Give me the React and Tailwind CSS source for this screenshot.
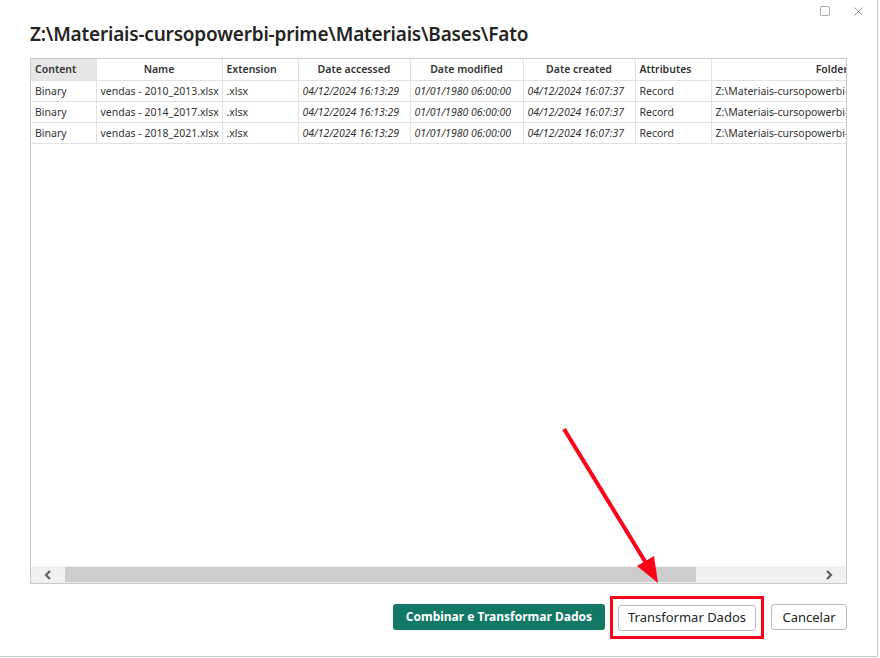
import { X, Square } from 'lucide-react';

const COLUMNS = [
  { label: 'Content', w: 65, align: 'left' },
  { label: 'Name', w: 126, align: 'center' },
  { label: 'Extension', w: 76, align: 'left' },
  { label: 'Date accessed', w: 112, align: 'center' },
  { label: 'Date modified', w: 113, align: 'center' },
  { label: 'Date created', w: 112, align: 'center' },
  { label: 'Attributes', w: 76, align: 'left' },
  { label: 'Folder Path', w: 268, align: 'center' },
];

const ROWS = [
  ['Binary', 'vendas - 2010_2013.xlsx', '.xlsx', '04/12/2024 16:13:29', '01/01/1980 06:00:00', '04/12/2024 16:07:37', 'Record', 'Z:\\Materiais-cursopowerbi-prime\\Materiais\\Bases\\Fato\\'],
  ['Binary', 'vendas - 2014_2017.xlsx', '.xlsx', '04/12/2024 16:13:29', '01/01/1980 06:00:00', '04/12/2024 16:07:37', 'Record', 'Z:\\Materiais-cursopowerbi-prime\\Materiais\\Bases\\Fato\\'],
  ['Binary', 'vendas - 2018_2021.xlsx', '.xlsx', '04/12/2024 16:13:29', '01/01/1980 06:00:00', '04/12/2024 16:07:37', 'Record', 'Z:\\Materiais-cursopowerbi-prime\\Materiais\\Bases\\Fato\\'],
];

const ITALIC = [3, 4, 5];

export default function App() {
  return (
    <div className="w-[880px] h-[658px] bg-white font-['Noto_Sans',sans-serif] text-[#333]">
      <div className="relative w-[878px] h-[657px] border-r border-b border-[#c8c8c8] flex flex-col">
        {/* Window controls */}
        <div className="flex justify-end items-center gap-[20px] h-[20px] pr-[11px] pt-[2px] text-[#777]">
          <Square size={12} strokeWidth={1.2} />
          <X size={15} strokeWidth={1.2} />
        </div>

        {/* Title */}
        <h1 className="pl-[30px] text-[19px] leading-[28px] font-semibold tracking-[-0.2px] text-[#252423] mb-[10px]">
          Z:\Materiais-cursopowerbi-prime\Materiais\Bases\Fato
        </h1>

        {/* Table */}
        <div className="mx-[30px] h-[526px] border border-[#c8c8c8] flex flex-col">
          <div className="flex-1 overflow-hidden">
            <table className="table-fixed border-collapse text-[10.5px] leading-[20px] w-[948px]">
              <colgroup>
                {COLUMNS.map(c => <col key={c.label} style={{ width: c.w }} />)}
              </colgroup>
              <thead>
                <tr className="h-[21px]">
                  {COLUMNS.map((c, i) => (
                    <th key={c.label}
                      className={`border-b border-r border-[#e1e1e1] px-[4px] font-semibold whitespace-nowrap overflow-hidden ${i === 0 ? 'bg-[#e6e6e6]' : 'bg-white'} ${c.align === 'center' ? 'text-center' : 'text-left'}`}>
                      {c.label}
                    </th>
                  ))}
                </tr>
              </thead>
              <tbody>
                {ROWS.map((row, r) => (
                  <tr key={r} className="h-[21px]">
                    {row.map((cell, i) => (
                      <td key={i}
                        className={`border-b border-r border-[#e1e1e1] px-[4px] whitespace-nowrap overflow-hidden ${ITALIC.includes(i) ? 'italic' : ''}`}>
                        {cell}
                      </td>
                    ))}
                  </tr>
                ))}
              </tbody>
            </table>
          </div>

          {/* Horizontal scrollbar */}
          <div className="h-[17px] bg-[#f0f0f0] flex items-center">
            <div className="w-[34px] flex justify-center">
              <svg width="10" height="10" viewBox="0 0 10 10">
                <polyline points="7,1 3,5 7,9" fill="none" stroke="#606060" strokeWidth="2.2" />
              </svg>
            </div>
            <div className="w-[631px] h-[15px] bg-[#cdcdcd]" />
            <div className="flex-1" />
            <div className="w-[34px] flex justify-center">
              <svg width="10" height="10" viewBox="0 0 10 10">
                <polyline points="3,1 7,5 3,9" fill="none" stroke="#606060" strokeWidth="2.2" />
              </svg>
            </div>
          </div>
        </div>

        {/* Buttons */}
        <div className="flex justify-end items-center gap-[14px] pr-[30px] mt-[12px]">
          <button className="h-[26px] px-[13px] rounded-[3px] bg-[#117865] text-white text-[12px] font-bold">
            Combinar e Transformar Dados
          </button>
          <div className="border-[3px] border-[#ff0019] p-[5px] -ml-[9px] -mr-[7px]">
            <button className="h-[26px] w-[138px] rounded-[3px] border border-[#bdbdbd] bg-white text-[13px] text-[#252423]">
              Transformar Dados
            </button>
          </div>
          <button className="h-[26px] w-[76px] rounded-[3px] border border-[#bdbdbd] bg-white text-[13px] text-[#252423]">
            Cancelar
          </button>
        </div>

        {/* Red annotation arrow */}
        <svg className="absolute left-0 top-0 pointer-events-none" width="878" height="657">
          <line x1="564" y1="429" x2="646" y2="563" stroke="#ff0019" strokeWidth="4" />
          <polygon points="658,583 637,566 654,556" fill="#ff0019" />
        </svg>
      </div>
    </div>
  );
}
